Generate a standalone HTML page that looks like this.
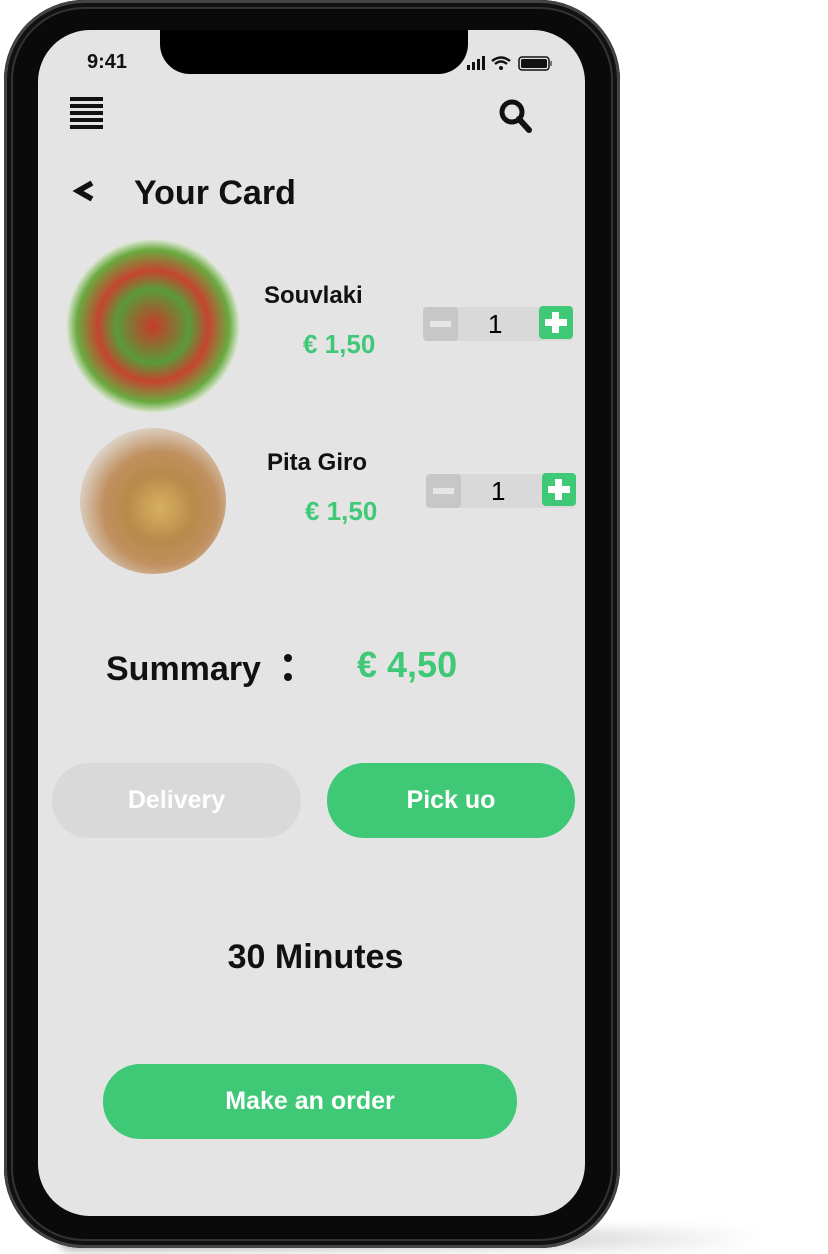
<!DOCTYPE html>
<html><head><meta charset="utf-8"><style>
*{margin:0;padding:0;box-sizing:border-box}
body{width:828px;height:1254px;background:#fff;position:relative;overflow:hidden;font-family:"Liberation Sans",sans-serif}
.shadow{position:absolute;left:60px;top:1228px;width:700px;height:22px;background:linear-gradient(90deg,rgba(0,0,0,.35),rgba(0,0,0,.15) 70%,rgba(0,0,0,0));filter:blur(5px);border-radius:10px}
.phone{position:absolute;left:4px;top:0;width:616px;height:1248px;background:#0a0a0a;border-radius:80px;box-shadow:inset 0 0 0 3px #444,inset 0 0 0 7px #111,inset 0 0 0 9px #333}
.screen{position:absolute;left:34px;top:30px;width:547px;height:1186px;background:#e4e4e4;border-radius:52px;overflow:hidden}
.notch{position:absolute;left:122px;top:-2px;width:308px;height:46px;background:#000;border-radius:0 0 30px 30px}
.abs{position:absolute}
.g{color:#3fc976}
.b{font-weight:bold}
.btn{position:absolute;border-radius:37px;color:#fff;font-weight:bold;font-size:25px;display:flex;align-items:center;justify-content:center}
.step{position:absolute;height:34px;width:150px;background:#d9d9d9;border-radius:4px}
.step .m{position:absolute;left:0;top:0;width:35px;height:34px;background:#c7c7c7;border-radius:4px}
.step .m:after{content:"";position:absolute;left:7px;top:14px;width:21px;height:6px;background:#e6e6e6}
.step .p{position:absolute;right:0;top:-1px;width:34px;height:33px;background:#3fc976;border-radius:4px}
.step .p:before{content:"";position:absolute;left:6px;top:13px;width:22px;height:7px;background:#fff}
.step .p:after{content:"";position:absolute;left:13px;top:6px;width:7px;height:21px;background:#fff}
.step span{position:absolute;left:65px;top:0;font-size:26px;line-height:34px}
</style></head><body>
<div class="shadow"></div>
<div class="phone">
<div class="screen">
<div class="notch"></div>
<div class="abs" style="left:49px;top:21px;font-size:20px;font-weight:bold;color:#111">9:41</div>
<svg class="abs" style="left:429px;top:25px" width="90" height="18" viewBox="0 0 90 18">
<rect x="0" y="10" width="3" height="5" fill="#111"/><rect x="5" y="7" width="3" height="8" fill="#111"/><rect x="10" y="4" width="3" height="11" fill="#111"/><rect x="15" y="1" width="3" height="14" fill="#111"/>
<path d="M25 6 Q34 -1 43 6 M28 9 Q34 4 40 9" stroke="#111" stroke-width="2.4" fill="none"/><circle cx="34" cy="13" r="2" fill="#111"/>
<rect x="52" y="2" width="30" height="13" rx="3" fill="none" stroke="#111" stroke-width="1.5"/><rect x="54" y="4" width="26" height="9" rx="1.5" fill="#111"/><rect x="83" y="6" width="2" height="5" fill="#777"/>
</svg>
<svg class="abs" style="left:32px;top:67px" width="34" height="32"><g fill="#111"><rect y="0" width="33" height="4"/><rect y="7" width="33" height="4"/><rect y="14" width="33" height="4"/><rect y="21" width="33" height="4"/><rect y="28" width="33" height="4"/></g></svg>
<svg class="abs" style="left:460px;top:68px" width="36" height="38"><circle cx="14" cy="14" r="10" stroke="#111" stroke-width="5" fill="none"/><path d="M21 21 L31 32" stroke="#111" stroke-width="6" stroke-linecap="round"/></svg>
<svg class="abs" style="left:34px;top:149px" width="26" height="26"><path d="M20 4 L6 12 L20 20" stroke="#111" stroke-width="5.5" fill="none" stroke-linejoin="miter"/></svg>
<div class="abs b" style="left:96px;top:144px;font-size:34px;color:#111">Your Card</div>

<div class="abs" style="left:28px;top:209px;width:174px;height:174px;border-radius:50%;background:radial-gradient(circle at 50% 50%,#c83a2a 0,#5a9a3a 30%,#c54530 45%,#6aaa40 62%,#f2f2f0 72%,#dcdcdc 100%)"></div>
<div class="abs b" style="left:226px;top:252px;font-size:24px;color:#111">Souvlaki</div>
<div class="abs b g" style="left:265px;top:299px;font-size:26px">€ 1,50</div>
<div class="step" style="left:385px;top:277px"><div class="m"></div><span>1</span><div class="p"></div></div>

<div class="abs" style="left:42px;top:398px;width:146px;height:146px;border-radius:50%;background:radial-gradient(circle at 55% 55%,#d8b060 0,#b98a4a 30%,#c09060 50%,#e0d8d0 75%,#8a9ab0 100%)"></div>
<div class="abs b" style="left:229px;top:419px;font-size:24px;color:#111">Pita Giro</div>
<div class="abs b g" style="left:267px;top:466px;font-size:26px">€ 1,50</div>
<div class="step" style="left:388px;top:444px"><div class="m"></div><span>1</span><div class="p"></div></div>

<div class="abs b" style="left:68px;top:620px;font-size:34px;color:#111">Summary</div>
<div class="abs" style="left:246px;top:624px;width:8px;height:8px;border-radius:50%;background:#111"></div>
<div class="abs" style="left:246px;top:643px;width:8px;height:8px;border-radius:50%;background:#111"></div>
<div class="abs b g" style="left:319px;top:614px;font-size:36px">€ 4,50</div>

<div class="btn" style="left:14px;top:733px;width:249px;height:75px;background:#d9d9d9">Delivery</div>
<div class="btn" style="left:289px;top:733px;width:248px;height:75px;background:#3fc976">Pick uo</div>

<div class="abs b" style="left:0;width:555px;text-align:center;top:908px;font-size:34px;color:#111">30 Minutes</div>

<div class="btn" style="left:65px;top:1034px;width:414px;height:75px;background:#3fc976">Make an order</div>
</div>
</div>
</body></html>
